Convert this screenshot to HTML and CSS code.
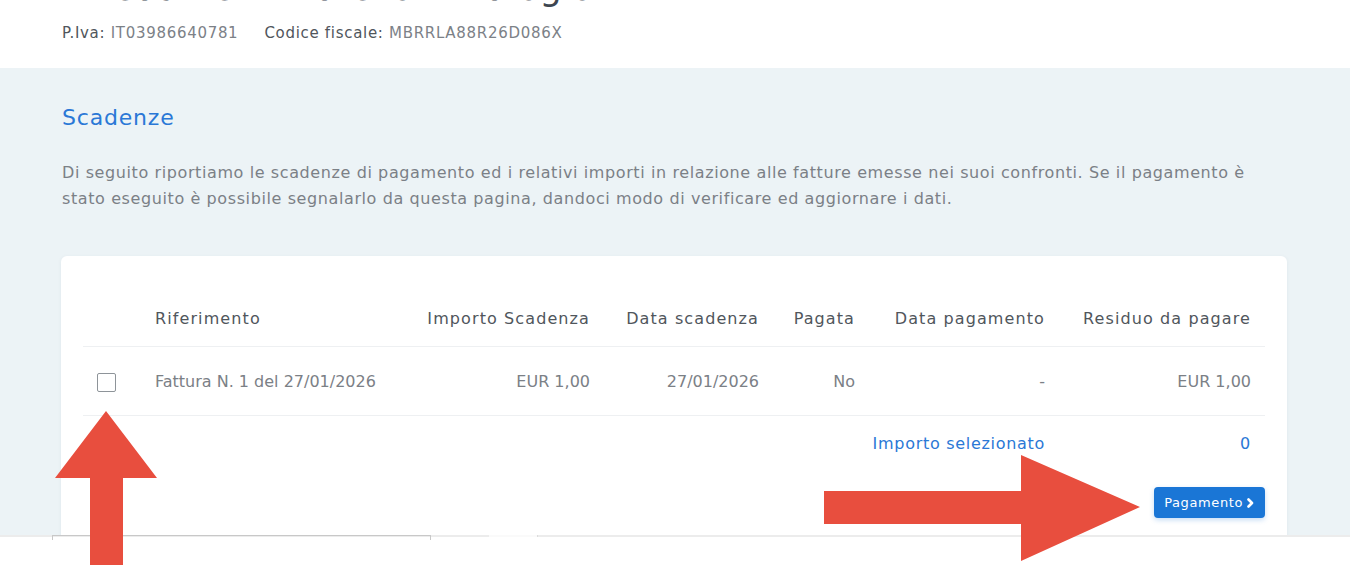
FILE: index.html
```html
<!DOCTYPE html>
<html lang="it">
<head>
    <meta charset="UTF-8">
    <meta name="viewport" content="width=device-width, initial-scale=1.0">
    <title>Scadenze</title>
    <link rel="stylesheet" href="styles.css">
</head>
<body>
    <header class="company">
        <h1 class="company-name">Arredamenti Aurelio Ambrogio</h1>
        <div class="tax-ids">
            <span><b>P.Iva:</b> IT03986640781</span>
            <span><b>Codice fiscale:</b> MBRRLA88R26D086X</span>
        </div>
    </header>

    <main class="due-section">
        <h2>Scadenze</h2>
        <p class="intro">
            Di seguito riportiamo le scadenze di pagamento ed i relativi importi in relazione alle fatture emesse nei suoi confronti. Se il pagamento è
            stato eseguito è possibile segnalarlo da questa pagina, dandoci modo di verificare ed aggiornare i dati.
        </p>

        <div class="card">
            <table class="due-table">
                <colgroup>
                    <col class="c-check">
                    <col class="c-ref">
                    <col class="c-amount">
                    <col class="c-date">
                    <col class="c-paid">
                    <col class="c-paydate">
                    <col class="c-rest">
                </colgroup>
                <thead>
                    <tr>
                        <th></th>
                        <th class="left">Riferimento</th>
                        <th>Importo Scadenza</th>
                        <th>Data scadenza</th>
                        <th>Pagata</th>
                        <th>Data pagamento</th>
                        <th>Residuo da pagare</th>
                    </tr>
                </thead>
                <tbody>
                    <tr>
                        <td><span class="checkbox"></span></td>
                        <td class="left">Fattura N. 1 del 27/01/2026</td>
                        <td>EUR 1,00</td>
                        <td>27/01/2026</td>
                        <td>No</td>
                        <td>-</td>
                        <td>EUR 1,00</td>
                    </tr>
                </tbody>
                <tfoot>
                    <tr>
                        <td colspan="6">Importo selezionato</td>
                        <td>0</td>
                    </tr>
                </tfoot>
            </table>

            <div class="actions">
                <button class="pay-btn">
                    Pagamento
                    <svg width="9" height="10" viewBox="0 0 9 10"><polyline points="2.5,1.5 6,5 2.5,8.5" fill="none" stroke="#fff" stroke-width="2.6" stroke-linecap="round" stroke-linejoin="round"/></svg>
                </button>
            </div>
        </div>
    </main>

    <!-- bottom bar overlapping the page -->
    <div class="bottom-bar">
        <span class="field"></span>
        <span class="field-gap"></span>
    </div>

    <!-- pointer arrows -->
    <svg class="arrow arrow-up" width="102" height="154" viewBox="0 0 102 154">
        <polygon points="51,0 102,67 68,67 68,154 35,154 35,67 0,67" fill="#e84e3e"/>
    </svg>
    <svg class="arrow arrow-right" width="316" height="106" viewBox="0 0 316 106">
        <polygon points="0,36 197,36 197,0 316,52 197,106 197,69 0,69" fill="#e84e3e"/>
    </svg>
</body>
</html>
```

FILE: styles.css
```css
* {
    margin: 0;
    padding: 0;
    box-sizing: border-box;
}

body {
    font-family: "DejaVu Sans", "Open Sans", sans-serif;
    color: #6c7177;
    background: #ffffff;
    position: relative;
    height: 565px;
    overflow: hidden;
}

/* company header */
.company {
    height: 68px;
    padding: 0 62px;
    overflow: hidden;
    background: #ffffff;
}

.company-name {
    margin-top: -36px;
    height: 48px;
    font-size: 35px;
    line-height: 48px;
    font-weight: 400;
    color: #3d4650;
    white-space: nowrap;
}

.tax-ids {
    display: flex;
    gap: 26px;
    margin-top: 10px;
    font-size: 15px;
    line-height: 22px;
    letter-spacing: 0.7px;
    color: #7c8187;
}

.tax-ids b {
    font-weight: 400;
    color: #50565c;
}

/* due dates section */
.due-section {
    background: #ecf3f6;
    padding: 35px 61px 0 61px;
    height: 497px;
}

.due-section h2 {
    font-size: 22px;
    line-height: 30px;
    font-weight: 400;
    letter-spacing: 0.8px;
    color: #2a78d6;
    padding-left: 1px;
}

.intro {
    margin-top: 27px;
    padding-left: 1px;
    max-width: 1205px;
    font-size: 16px;
    line-height: 26px;
    letter-spacing: 0.6px;
    color: #7b8086;
}

.card {
    margin-top: 44px;
    margin-right: 2px;
    background: #ffffff;
    border-radius: 6px;
    box-shadow: 0 1px 4px rgba(40, 60, 80, 0.06);
    padding: 40px 22px 30px;
}

.due-table {
    width: 100%;
    border-collapse: collapse;
    table-layout: fixed;
    font-size: 16px;
    line-height: 24px;
}

.c-check { width: 58px; }
.c-ref { width: 270px; }
.c-amount { width: 193px; }
.c-date { width: 169px; }
.c-paid { width: 96px; }
.c-paydate { width: 190px; }
.c-rest { width: 206px; }

.due-table th,
.due-table td {
    text-align: right;
    padding: 0 14px;
    white-space: nowrap;
}

.due-table .left {
    text-align: left;
}

.due-table th {
    padding-top: 11px;
    padding-bottom: 15px;
    font-weight: 400;
    letter-spacing: 1.1px;
    color: #50565c;
    border-bottom: 1px solid #eef0f2;
}

.due-table tbody td {
    padding-top: 23px;
    padding-bottom: 21px;
    color: #7b8086;
    border-bottom: 1px solid #eef0f2;
}

.due-table tfoot td {
    padding-top: 16px;
    padding-bottom: 12px;
    letter-spacing: 0.7px;
    color: #2a78d6;
}

.checkbox {
    display: block;
    width: 19px;
    height: 19px;
    border: 1px solid #8e9499;
    border-radius: 2px;
    background: #ffffff;
}

.actions {
    display: flex;
    justify-content: flex-end;
    margin-top: 19px;
}

.pay-btn {
    display: flex;
    align-items: center;
    gap: 3px;
    height: 31px;
    padding: 0 10px;
    border: none;
    border-radius: 4px;
    background: #1a76d6;
    color: #ffffff;
    font-family: inherit;
    font-size: 13px;
    letter-spacing: 0.6px;
    box-shadow: 0 2px 5px rgba(26, 118, 214, 0.25);
    cursor: pointer;
}

/* white strip at the bottom edge */
.bottom-bar {
    position: absolute;
    left: 0;
    right: 0;
    top: 535px;
    height: 30px;
    background: #ffffff;
    border-top: 2px solid #ececec;
}

.bottom-bar .field {
    position: absolute;
    left: 52px;
    top: -2px;
    width: 379px;
    height: 5px;
    border: 1px solid #c8c8c8;
    border-bottom: none;
}

.bottom-bar .field-gap {
    position: absolute;
    left: 489px;
    top: -2px;
    width: 49px;
    height: 2px;
    background: #fafafa;
    border-right: 1px solid #dcdcdc;
}

.arrow {
    position: absolute;
    display: block;
}

.arrow-up {
    left: 55px;
    top: 411px;
}

.arrow-right {
    left: 824px;
    top: 455px;
}
```
